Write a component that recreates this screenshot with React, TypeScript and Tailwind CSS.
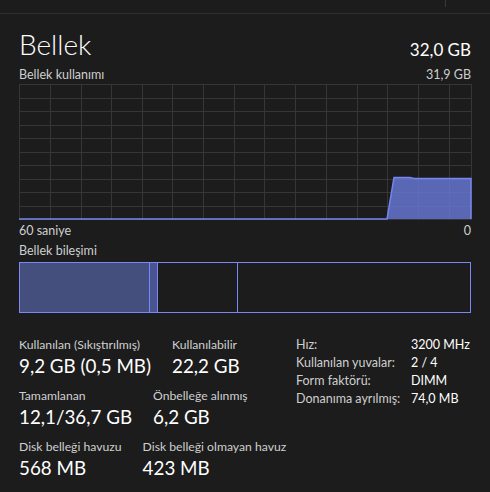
import React from "react";

const font = { fontFamily: 'Lato, "Open Sans", sans-serif' };

function UsageGraph() {
  const vLines = [31, 62, 92, 123, 153, 184, 215, 245, 276, 307, 338, 368, 399, 430];
  const hLines = [13.5, 27, 40.5, 54, 67.5, 81, 94.5, 108, 121.5];
  return (
    <svg width="453" height="136" className="block">
      <rect x="0.5" y="0.5" width="452" height="135" fill="none" stroke="#363636" />
      {vLines.map((x) => (
        <line key={"v" + x} x1={x + 0.5} y1="0" x2={x + 0.5} y2="136" stroke="#363636" />
      ))}
      {hLines.map((y) => (
        <line key={"h" + y} x1="0" y1={Math.round(y) + 0.5} x2="453" y2={Math.round(y) + 0.5} stroke="#363636" />
      ))}
      <polygon
        points="368,135 375,93.5 391,93.5 395,94.5 452,94.5 452,135"
        fill="rgba(106,122,220,0.8)"
      />
      <polyline
        points="0,135 368,135 375,93.5 391,93.5 395,94.5 452,94.5 452,135"
        fill="none"
        stroke="#7686ee"
        strokeWidth="1.5"
      />
    </svg>
  );
}

function Stat({ label, value }: { label: string; value: string }) {
  return (
    <div className="flex flex-col whitespace-nowrap">
      <span className="text-[12.2px] text-[#cfcfcf] leading-[17px]">{label}</span>
      <span className="text-[18.8px] leading-[26px]">{value}</span>
    </div>
  );
}

export default function App() {
  return (
    <div className="w-[490px] h-[492px] bg-[#1c1c1c] text-white overflow-hidden" style={font}>
      {/* top strip from the pane above */}
      <div className="h-[14px] border-b border-[#2e2e2e] flex justify-end pr-[44px]">
        <div className="h-[7px] border-l border-[#3a3a3a]" />
      </div>

      <div className="px-[19px]">
        <div className="flex justify-between items-end h-[44px]">
          <span className="text-[28px] leading-none font-light">Bellek</span>
          <span className="text-[17px] leading-none">32,0 GB</span>
        </div>

        <div className="flex justify-between text-[12.5px] text-[#cfcfcf] leading-none mt-[11px] mb-[2px]">
          <span>Bellek kullanımı</span>
          <span>31,9 GB</span>
        </div>

        <UsageGraph />

        <div className="flex justify-between text-[12.5px] text-[#cfcfcf] leading-none mt-[5px]">
          <span>60 saniye</span>
          <span>0</span>
        </div>

        <div className="text-[12.5px] text-[#cfcfcf] leading-none mt-[8px] mb-[4px]">Bellek bileşimi</div>

        <div className="flex h-[51px] border border-[#7888f8]">
          <div className="w-[130px] bg-[#454f7e] border-r border-[#7888f8]" />
          <div className="w-[8px] bg-[#4a5490] border-r border-[#7888f8]" />
          <div className="w-[80px] border-r border-[#7888f8]" />
          <div className="flex-1" />
        </div>

        <div className="flex items-start mt-[23px]">
          <div className="w-[277px] flex flex-col gap-[8px]">
            <div className="flex gap-[21px]">
              <Stat label="Kullanılan (Sıkıştırılmış)" value="9,2 GB (0,5 MB)" />
              <Stat label="Kullanılabilir" value="22,2 GB" />
            </div>
            <div className="flex gap-[21px]">
              <Stat label="Tamamlanan" value="12,1/36,7 GB" />
              <Stat label="Önbelleğe alınmış" value="6,2 GB" />
            </div>
            <div className="flex gap-[21px]">
              <Stat label="Disk belleği havuzu" value="568 MB" />
              <Stat label="Disk belleği olmayan havuz" value="423 MB" />
            </div>
          </div>

          <div className="grid grid-cols-[115px_auto] text-[12.5px] leading-[18px]">
            <span className="text-[#cfcfcf]">Hız:</span>
            <span>3200 MHz</span>
            <span className="text-[#cfcfcf]">Kullanılan yuvalar:</span>
            <span>2 / 4</span>
            <span className="text-[#cfcfcf]">Form faktörü:</span>
            <span>DIMM</span>
            <span className="text-[#cfcfcf]">Donanıma ayrılmış:</span>
            <span>74,0 MB</span>
          </div>
        </div>
      </div>
    </div>
  );
}
